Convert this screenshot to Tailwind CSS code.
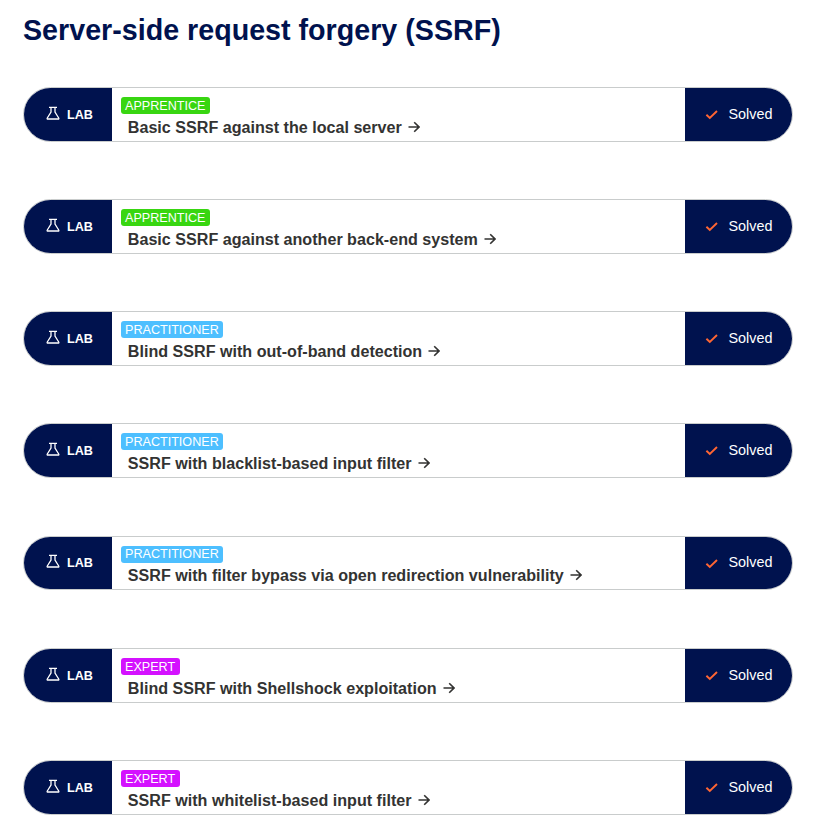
<!DOCTYPE html>
<html lang="en">
<head>
<meta charset="utf-8">
<title>Server-side request forgery (SSRF)</title>
<script src="https://cdn.jsdelivr.net/npm/@tailwindcss/browser@4"></script>
</head>
<body class="bg-white font-['Liberation_Sans',Arial,sans-serif] h-[839px] overflow-hidden">
<main class="pl-[23px] pr-[26px] pt-[11px]">
  <h1 class="text-[28.67px] leading-[38px] font-bold text-[#00124e] whitespace-nowrap">Server-side request forgery (SSRF)</h1>
  <div id="labs" class="mt-[38px] flex flex-col"></div>
</main>
<template id="row">
  <section class="flex w-[770px] shrink-0 overflow-hidden rounded-[28px] border border-[#c9cccc]">
    <div class="flex w-[88px] shrink-0 items-center bg-[#00124e] pl-[22px] text-white">
      <svg class="mb-[3px] h-[15px] w-[14px] shrink-0" viewBox="0 0 14 15" fill="none" stroke="#fff" stroke-width="1.3"><path d="M3 1.3h8M5 1.3v4.8L1.3 12q-.6 1.2.7 1.2h10q1.3 0 .7-1.2L9 6.1V1.3M2 12.9h10"/></svg>
      <span class="ml-[7px] text-[12.64px] leading-4 font-bold">LAB</span>
    </div>
    <div class="flex grow flex-col items-start pt-[9px] pl-[9px]">
      <span data-badge class="h-[17px] rounded-[3px] pr-[4.5px] pl-1 text-[12.6px] text-white"></span>
      <div data-line class="ml-[6.8px] flex items-center text-[16.13px] leading-[18px] font-bold text-[#333332] whitespace-nowrap">
        <span data-title></span>
        <svg class="mb-[1px] ml-[6px] h-[12px] w-[12px]" viewBox="0 0 12 12" fill="none" stroke="#333332" stroke-width="1.6"><path d="M.5 6h10.6M6.2 1.2 11 6 6.2 10.8"/></svg>
      </div>
    </div>
    <div class="flex w-[107px] shrink-0 items-center bg-[#00124e] pl-[20px] text-white">
      <svg class="mt-[1px] h-[10px] w-[13px] shrink-0" viewBox="0 0 13 10" fill="none" stroke="#ff6633" stroke-width="1.9"><path d="M1.4 4.7 4.8 8 12 1"/></svg>
      <span class="mb-[2px] ml-[10.5px] text-[14.4px] leading-4">Solved</span>
    </div>
  </section>
</template>
<script>
const green = 'bg-[#38d611]', blue = 'bg-[#4dbfff]', purple = 'bg-[#d411ff]';
const tall = ['h-[55px]', 'mb-[57px]', 'leading-[18px]', 'mt-[4px]'];
const labs = [
  ['APPRENTICE', green, 'Basic SSRF against the local server', tall],
  ['APPRENTICE', green, 'Basic SSRF against another back-end system', tall],
  ['PRACTITIONER', blue, 'Blind SSRF with out-of-band detection', tall],
  ['PRACTITIONER', blue, 'SSRF with blacklist-based input filter', ['h-[55px]', 'mb-[58px]', 'leading-[18px]', 'mt-[4px]']],
  ['PRACTITIONER', blue, 'SSRF with filter bypass via open redirection vulnerability', ['h-[54px]', 'mb-[58px]', 'leading-[17px]', 'mt-[3px]']],
  ['EXPERT', purple, 'Blind SSRF with Shellshock exploitation', tall],
  ['EXPERT', purple, 'SSRF with whitelist-based input filter', tall],
];
for (const [level, color, title, [height, gap, leading, offset]] of labs) {
  const row = document.getElementById('row').content.cloneNode(true);
  row.querySelector('section').classList.add(height, gap);
  const badge = row.querySelector('[data-badge]');
  badge.classList.add(color, leading);
  badge.textContent = level;
  row.querySelector('[data-line]').classList.add(offset);
  row.querySelector('[data-title]').textContent = title;
  document.getElementById('labs').append(row);
}
</script>
</body>
</html>
